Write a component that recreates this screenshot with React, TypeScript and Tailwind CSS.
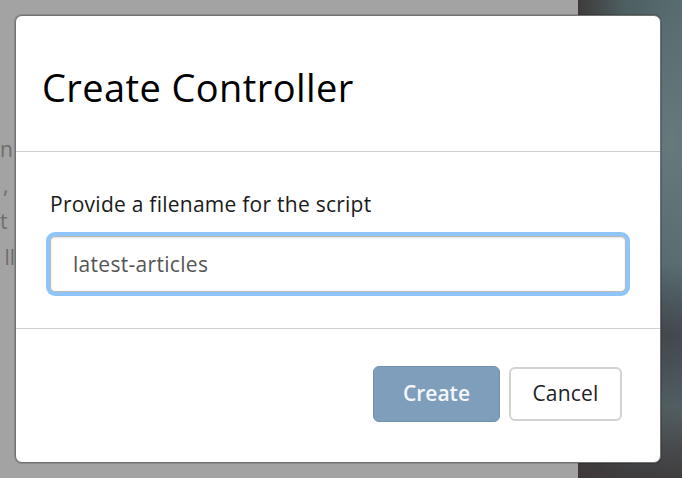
import React from "react";

export default function App() {
  const font = { fontFamily: '"Open Sans", "Noto Sans", sans-serif' };
  return (
    <div className="relative flex h-[478px] w-[682px] overflow-hidden" style={font}>
      <div className="relative h-full w-[578px] bg-[#a3a3a3]">
        <div className="absolute left-0 top-[131px] flex w-[15px] flex-col text-[21px] leading-[36px] text-[#6e6e6e]">
          <div className="whitespace-nowrap pl-[0px]">n</div>
          <div className="whitespace-nowrap pl-[3px]">,</div>
          <div className="whitespace-nowrap pl-[0px]">t</div>
          <div className="self-end whitespace-nowrap">ll</div>
        </div>
      </div>
      <div className="h-full flex-1 bg-[radial-gradient(ellipse_60px_160px_at_90%_30%,#66797b_0%,transparent_100%),radial-gradient(ellipse_80px_60px_at_100%_88%,#5d6e70_0%,transparent_100%),linear-gradient(90deg,#3e3a3a_0%,#4e5f62_45%,#566b6e_100%)]">
        <div className="h-full w-full bg-[linear-gradient(180deg,transparent_0%,transparent_55%,rgba(60,58,66,0.7)_70%,rgba(60,58,66,0.3)_85%,rgba(62,56,57,0.9)_100%)]" />
      </div>

      <div className="absolute left-[15px] top-[15px] flex h-[448px] w-[646px] flex-col rounded-[7px] border border-[#727272] bg-white shadow-[0_0_0_1px_rgba(0,0,0,0.15)]">
        <div className="h-[136px] border-b border-[#cfcfcf] pl-[26px] pt-[51px]">
          <h1 className="text-[38px] leading-[40px] tracking-[0.4px] text-black">Create Controller</h1>
        </div>
        <div className="flex h-[177px] flex-col border-b border-[#cfcfcf] px-[34px] pt-[38px]">
          <label className="text-[21px] leading-[28px] tracking-[0.25px] text-[#1a1a1a]">Provide a filename for the script</label>
          <div className="mt-[18px] flex h-[56px] items-center rounded-[5px] border border-[#b9b9b9] bg-white pl-[22px] text-[21px] leading-[28px] tracking-[0.3px] text-[#555] shadow-[inset_0_1px_2px_rgba(0,0,0,0.12),0_0_0_4px_#90c5fa]">
            latest-articles
          </div>
        </div>
        <div className="flex flex-1 items-start justify-end gap-[9px] pr-[38px] pt-[37px]">
          <button className="flex h-[56px] w-[127px] items-center justify-center rounded-[6px] border border-[#7092ae] bg-[#7f9ebb] text-[21px] font-semibold text-[#f4f7fa]">
            Create
          </button>
          <button className="mt-[1px] flex h-[54px] w-[113px] items-center justify-center rounded-[6px] border-2 border-[#d2d2d2] bg-white text-[21px] tracking-[0.2px] text-[#222]">
            Cancel
          </button>
        </div>
      </div>
    </div>
  );
}
